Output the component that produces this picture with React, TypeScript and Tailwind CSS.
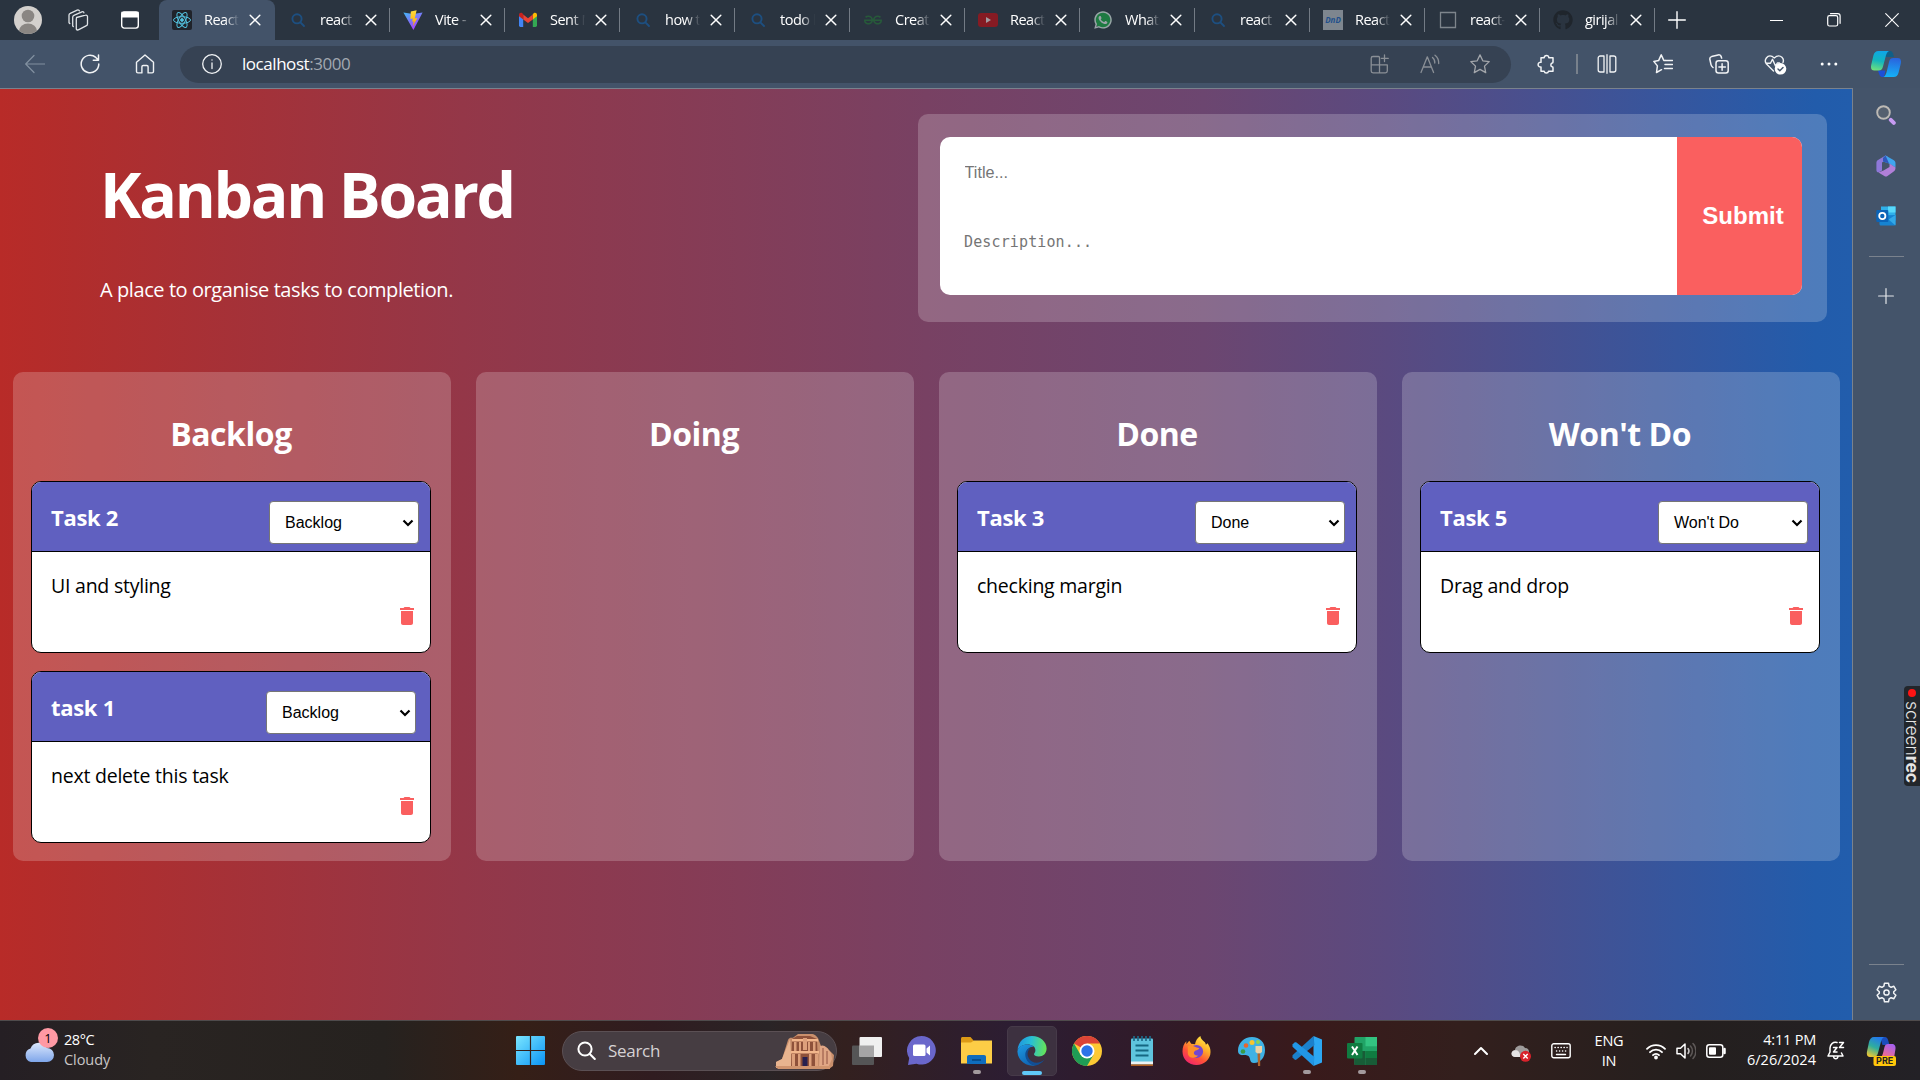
import React from "react";
import { FaGithub, FaWhatsapp } from "react-icons/fa";
import { SiGeeksforgeeks } from "react-icons/si";
import { MdDelete } from "react-icons/md";

type P = { children?: React.ReactNode; className?: string };

function Line({ children, className = "", vb = "0 0 20 20", w = 1.2 }: P & { vb?: string; w?: number }) {
  return (
    <svg width="20" height="20" viewBox={vb} className={"shrink-0 " + className} fill="none" stroke="currentColor" strokeWidth={w} strokeLinecap="round" strokeLinejoin="round">
      {children}
    </svg>
  );
}

/* ---------- Browser tabs ---------- */

const ReactIcon = () => (
  <svg viewBox="0 0 20 20" className="size-5" fill="none" stroke="#53c1de" strokeWidth="1">
    <rect width="20" height="20" rx="2" fill="#20232a" stroke="none" />
    <ellipse cx="10" cy="10" rx="8.5" ry="3.3" />
    <ellipse cx="10" cy="10" rx="8.5" ry="3.3" transform="rotate(60 10 10)" />
    <ellipse cx="10" cy="10" rx="8.5" ry="3.3" transform="rotate(120 10 10)" />
    <circle cx="10" cy="10" r="1.4" fill="#53c1de" />
  </svg>
);

const BingIcon = () => (
  <Line className="size-5 text-[#1d4f80]" w={1.9}>
    <circle cx="9" cy="8.8" r="4.6" />
    <path d="M12.4 12.4 16 16" />
  </Line>
);

const ViteIcon = () => (
  <svg viewBox="0 0 20 20" className="size-5">
    <defs>
      <linearGradient id="vite-a" x1="0" y1="0" x2=".6" y2="1">
        <stop stopColor="#41b8f5" />
        <stop offset="1" stopColor="#b03bfe" />
      </linearGradient>
      <linearGradient id="vite-b" x1="0" y1="0" x2="0" y2="1">
        <stop stopColor="#ffdc3c" />
        <stop offset="1" stopColor="#ffa800" />
      </linearGradient>
    </defs>
    <path d="M.4 2.6 10 4l9.6-1.4L10.4 20Z" fill="url(#vite-a)" />
    <path d="M13.6.2 7.8 1.4 7.4 9l2.4-.5-.7 3.2 1.6-.4-1 4.9L14.4 7.9l-2.6.5Z" fill="url(#vite-b)" />
  </svg>
);

const GmailIcon = () => (
  <svg viewBox="0 0 20 20" className="size-5">
    <path d="M1 5.5V15.500a1.400 1.400 0 0 0 1.400 1.400H5.200V8.600Z" fill="#4285f4" />
    <path d="M19 5.500V15.500a1.400 1.400 0 0 1-1.400 1.400H14.800V8.600Z" fill="#34a853" />
    <path d="M14.800 4.600V9.400L19 6.200V4.600c0-1.700-1.900-2.500-3.200-1.500Z" fill="#fbbc04" />
    <path d="M5.200 9.400V4.600L10 8.200l4.800-3.600v4.800L10 13Z" fill="#ea4335" />
    <path d="M1 4.600v1.600l4.200 3.200V4.600l-1-1.500C2.900 2.100 1 2.900 1 4.600Z" fill="#c5221f" />
  </svg>
);

const YoutubeIcon = () => (
  <svg viewBox="0 0 20 20" className="size-5">
    <rect y="3" width="20" height="14" rx="3" fill="#861b23" />
    <path d="m8 7 5 3-5 3Z" fill="#a29b9f" />
  </svg>
);

const WhatsAppIcon = () => (
  <span className="relative flex size-5 items-center justify-center">
    <svg viewBox="0 0 20 20" className="absolute inset-0 size-5">
      <circle cx="10" cy="10" r="8.500" fill="#1e7a42" />
    </svg>
    <FaWhatsapp className="relative size-5 text-[#9aa3a8]" />
  </span>
);

const DndIcon = () => (
  <span className="flex h-5 w-5 items-center justify-center bg-[#7e868f] text-[8px] font-bold text-[#22508c] italic">DnD</span>
);

const SquareIcon = () => (
  <Line className="size-5 text-[#7e858c]" w={1.3}>
    <path d="M2.500 2.500h15v15h-15Z" strokeLinejoin="miter" />
  </Line>
);

const TABS: { title: string; icon: React.ReactNode }[] = [
  { title: "react c", icon: <BingIcon /> },
  { title: "Vite - n", icon: <ViteIcon /> },
  { title: "Sent M", icon: <GmailIcon /> },
  { title: "how to", icon: <BingIcon /> },
  { title: "todo li", icon: <BingIcon /> },
  { title: "Create", icon: <SiGeeksforgeeks className="size-[18px] text-[#275a3a]" /> },
  { title: "React J", icon: <YoutubeIcon /> },
  { title: "Whats", icon: <WhatsAppIcon /> },
  { title: "react d", icon: <BingIcon /> },
  { title: "React D", icon: <DndIcon /> },
  { title: "react-b", icon: <SquareIcon /> },
  { title: "girijal", icon: <FaGithub className="size-5 text-[#1f252c]" /> },
];

function TabBody({ title, icon }: { title: string; icon: React.ReactNode }) {
  return (
    <>
      <span className="ml-[13px] flex w-5 shrink-0 justify-center">{icon}</span>
      <span className="ml-[12px] w-[35px] shrink-0 overflow-hidden text-[14.5px] leading-5 tracking-[-0.5px] whitespace-nowrap text-white [mask-image:linear-gradient(to_right,black_60%,transparent)]">
        {title}
      </span>
      <Line className="ml-[10px] size-[12px] text-white" vb="0 0 12 12" w={1.5}>
        <path d="m1.200 1.200 9.600 9.600M10.800 1.200l-9.600 9.600" />
      </Line>
    </>
  );
}

function TabStrip() {
  return (
    <div className="flex h-10 items-center bg-[#2a3440]">
      <svg viewBox="0 0 28 28" className="ml-[14px] size-7 shrink-0">
        <clipPath id="avatar">
          <circle cx="14" cy="14" r="14" />
        </clipPath>
        <g clipPath="url(#avatar)">
          <rect width="28" height="28" fill="#d3d0cd" />
          <circle cx="14" cy="10" r="6.300" fill="#8a8683" />
          <ellipse cx="14" cy="25" rx="9" ry="7.500" fill="#8a8683" />
        </g>
      </svg>
      <Line className="ml-[25px] size-[22px] text-[#dfe3e7]" vb="0 0 22 22" w={1.3}>
        <path d="m9.500 8.500 9-2.300a1.500 1.500 0 0 1 2 1.500v7.300a2 2 0 0 1-1.500 1.900l-7.700 3.900a1.300 1.300 0 0 1-2-1.200V10a1.700 1.700 0 0 1 .8-1.500Z" />
        <path d="M6.300 17.500 5.700 17V8.200c0-.8.500-1.500 1.200-1.800l8-3.600c1-.4 1.900 0 2 1M2.800 14.500l-.8-.8V6c0-.7.500-1.400 1.200-1.700l7-3.200c1-.4 2 0 2.200.8" />
      </Line>
      <svg viewBox="0 0 18 18" className="ml-8 size-[18px] shrink-0" fill="none" stroke="#fff" strokeWidth="1.400">
        <rect x=".7" y=".9" width="16.600" height="16.200" rx="2.500" />
        <path d="M1 1.500h16v4.200H1Z" fill="#fff" />
      </svg>
      <div className="ml-5 flex h-10 w-[116px] shrink-0 items-center rounded-t-lg bg-[#435369]">
        <TabBody title="React A" icon={<ReactIcon />} />
      </div>
      {TABS.map((t, i) => (
        <div key={i} className="flex h-10 w-[115px] shrink-0 items-center">
          <TabBody {...t} />
          {i > 0 && <span className="ml-auto h-6 w-px bg-[#737b85]" />}
          {i === 0 && <span className="ml-auto h-6 w-px bg-[#737b85]" />}
        </div>
      ))}
      <Line className="ml-[13px] size-[18px] text-white" vb="0 0 18 18" w={1.4}>
        <path d="M9 .7v16.600M.7 9h16.600" />
      </Line>
      <div className="ml-[84px] h-px w-[13px] bg-white" />
      <Line className="ml-11 size-[14px] text-white" vb="0 0 14 14" w={1.2}>
        <rect x=".7" y="2.700" width="10" height="10.300" rx="1.800" />
        <path d="M3.500.7h7.300a2.300 2.300 0 0 1 2.300 2.300v7.300" />
      </Line>
      <Line className="ml-[44px] size-[14px] text-white" vb="0 0 14 14" w={1.1}>
        <path d="m.7.7 12.600 12.600M13.300.7.7 13.300" />
      </Line>
    </div>
  );
}

/* ---------- Toolbar ---------- */

function CopilotLogo({ className = "" }: P) {
  return (
    <svg viewBox="0 0 30 26" className={className}>
      <defs>
        <linearGradient id="cp-a" x1=".5" y1="0" x2=".3" y2="1">
          <stop stopColor="#0fa6e6" />
          <stop offset=".5" stopColor="#13b5bd" />
          <stop offset="1" stopColor="#6fe07c" />
        </linearGradient>
        <linearGradient id="cp-b" x1=".5" y1="0" x2=".4" y2="1">
          <stop stopColor="#2a63dd" />
          <stop offset="1" stopColor="#14b2f8" />
        </linearGradient>
      </defs>
      <path d="M14 0h5c2.300 0 2.900 1.800 3.400 3.800L23 6h-4.500L15 6Z" fill="#0f5f88" />
      <path d="M7 19.500h7.500L13 26h-1.500c-2.800 0-3.200-2.500-4.500-6.500Z" fill="#1d4fd8" />
      <path d="M7.500 0H18c-2.200 1-2.800 3.500-3.600 6.500l-2.400 9c-.7 2.600-1.700 4-4.500 4H3.300C.6 19.500-.5 17.500.2 14L2.400 4.500C3.200 1.500 4.700 0 7.500 0Z" fill="url(#cp-a)" />
      <path d="M22.500 26H12.500c2-1 2.700-3.500 3.500-6.500l2-8.500c.7-2.600 1.700-4 4.500-4h4.200c2.700 0 3.800 2 3.100 5.500l-2.200 9C26.800 24.500 25.300 26 22.500 26Z" fill="url(#cp-b)" />
    </svg>
  );
}

function Toolbar() {
  return (
    <div className="flex h-12 items-center bg-[#435369] text-[#f1f3f5]">
      <Line className="ml-[25px] text-[#8290a0]">
        <path d="M19.500 10H.8M9 1.500.7 10 9 18.500" />
      </Line>
      <Line className="ml-[35px]" w={1.5}>
        <path d="M18.800 10a8.800 8.800 0 1 1-3-6.600L18.300 6M18.500 1v5.200h-5.200" />
      </Line>
      <Line className="ml-[35px]" w={1.4}>
        <path d="M10 1 1.500 8.300v9.200c0 .8.600 1.400 1.400 1.400h4V12.800c0-.8.600-1.300 1.300-1.300h3.600c.7 0 1.300.5 1.300 1.300v6.100h4c.8 0 1.400-.6 1.400-1.400V8.300Z" />
      </Line>
      <div className="ml-[25px] flex h-[37px] w-[1331px] shrink-0 items-center rounded-full bg-[#364253]">
        <Line className="ml-[22px]" w={1.3}>
          <circle cx="10" cy="10" r="9.300" />
          <path d="M10 9v5.500M10 5.800v.3" />
        </Line>
        <span className="ml-5 text-[17px] leading-6 tracking-[-0.450px] text-white">
          localhost<span className="text-[#a2a8b0]">:3000</span>
        </span>
        <Line className="ml-auto text-[#8a8f96]" w={1.3}>
          <path d="M8.500 2.500H3A1.800 1.800 0 0 0 1.200 4.300V17c0 1 .8 1.800 1.800 1.800h12.500c1 0 1.800-.8 1.800-1.800v-6.200H1.200M8.500 2.500a1 1 0 0 1 1 1v15.300M14.500 1v6.500M11.300 4.300h7" />
        </Line>
        <Line className="ml-[30px] text-[#8a8f96]" w={1.3}>
          <path d="m1 18.500 6.300-15.700 6.300 15.700M3.300 13h8M12.500 3.500a6.500 6.500 0 0 1 2.300 5.500M15 1.200a10 10 0 0 1 3.700 8.300" />
        </Line>
        <Line className="mr-[21px] ml-[30px] text-[#a3a6ab]" w={1.3}>
          <path d="m10 .9 2.800 5.900 6.400.8-4.700 4.500 1.200 6.500L10 15.400l-5.700 3.200 1.200-6.500L.8 7.600l6.400-.8Z" />
        </Line>
      </div>
      <Line className="ml-[25px]" w={1.5}>
        <path d="M5 3.700h3.200a2.300 2.300 0 1 1 4.600 0H17V8a1 1 0 0 1-.8 1 2 2 0 0 0 0 3.800 1 1 0 0 1 .8 1v3.500h-4.500a2.200 2.200 0 0 1-4.300 0H5V13a2.400 2.400 0 1 1 0-4.700Z" />
      </Line>
      <span className="ml-5 h-5 w-[1.5px] bg-[#78818c]" />
      <Line className="ml-[19px]" w={1.5}>
        <path d="M7 2H3.300C2 2 1.200 2.900 1.200 4v12c0 1.100.8 2 2.100 2H7M13 2h3.700c1.300 0 2.100.9 2.100 2v12c0 1.100-.8 2-2.100 2H13M10 .7v18.600M7 2v16M13 2v16" strokeWidth="1.300" />
      </Line>
      <Line className="ml-9" w={1.5}>
        <path d="M12.300 6.500 10.800 6.400 8.200.9 5.600 6.600.8 7.400l3.600 4.500-.9 6.600 5-2.800M12.500 6.500h7M12 10.500h7.500M11.500 14.500h8" />
      </Line>
      <Line className="ml-9" w={1.5}>
        <rect x="7" y="6.800" width="12.200" height="12.200" rx="2.500" />
        <path d="M13.100 9.700v6.500M9.900 12.900h6.500M4 13.500C2.500 12.500 2.300 12 2 10.700L.9 5.500C.6 4 1.200 3 2.600 2.600l6.500-1.700c1.500-.4 2.700.2 3 1.700l.5 1.500" />
      </Line>
      <svg viewBox="0 0 23 21" className="ml-[35px] h-[21px] w-[23px]" fill="none" stroke="#f1f3f5" strokeWidth="1.400" strokeLinejoin="round" strokeLinecap="round">
        <path d="M9.500 17 2.500 10C-.7 6 3.500.5 8 2.300L10.300 4l2.300-1.700c4-1.700 8 2.200 6.400 6.200M2.500 9.300h4l2-4 3 6.700 1.800-3h2.200" />
        <circle cx="16.500" cy="14.800" r="5.800" fill="#fff" stroke="none" />
        <path d="m14 15 1.800 1.800 3.200-3.400" stroke="#435369" />
      </svg>
      <svg viewBox="0 0 18 4" className="ml-[33px] h-1 w-[18px] fill-white">
        <circle cx="2.200" cy="2" r="1.500" />
        <circle cx="9" cy="2" r="1.500" />
        <circle cx="15.800" cy="2" r="1.500" />
      </svg>
      <CopilotLogo className="ml-[33px] h-[26px] w-[30px]" />
    </div>
  );
}

/* ---------- Kanban page ---------- */

type Task = { title: string; text: string; status: string; nudge?: boolean };
const COLUMNS: { name: string; tasks: Task[] }[] = [
  {
    name: "Backlog",
    tasks: [
      { title: "Task 2", text: "UI and styling", status: "Backlog" },
      { title: "task 1", text: "next delete this task", status: "Backlog", nudge: true },
    ],
  },
  { name: "Doing", tasks: [] },
  { name: "Done", tasks: [{ title: "Task 3", text: "checking margin", status: "Done" }] },
  { name: "Won't Do", tasks: [{ title: "Task 5", text: "Drag and drop", status: "Won't Do" }] },
];

function TaskCard({ title, text, status, nudge }: Task) {
  return (
    <article className="h-[172px] w-[400px] overflow-hidden rounded-[10px] border border-black bg-white">
      <header className="flex h-[70px] items-start justify-between border-b border-black bg-[#6060c0] pl-[19px]">
        <h3 className="mt-5 text-[22px] leading-[30px] font-bold tracking-[-0.300px] text-white">{title}</h3>
        <div
          className={
            "mt-[19px] flex h-[43px] w-[150px] items-center justify-between rounded-[4px] border border-[#767676] bg-white pr-[4px] pl-[15px] font-['Liberation_Sans',sans-serif] text-[16px] text-black " +
            (nudge ? "mr-[14px]" : "mr-[11px]")
          }
        >
          {status}
          <Line className="h-[8px] w-[12px]" vb="0 0 12 8" w={2.2}>
            <path d="m1.500 1.500 4.500 4.500 4.500-4.500" strokeLinecap="butt" strokeLinejoin="miter" />
          </Line>
        </div>
      </header>
      <p className="mt-[20px] pl-[19px] text-[19.5px] leading-7 tracking-[-0.230px] text-black">{text}</p>
      <div className="mt-[4px] flex justify-end pr-[11px]">
        <MdDelete className="size-6 text-[#fa5f5f]" />
      </div>
    </article>
  );
}

function KanbanPage() {
  return (
    <main className="h-[932px] w-[1852px] border-t border-[#7a828d] bg-[linear-gradient(90deg,#b82b28_0%,#b12d2c_4%,#943748_25%,#784163_50%,#6c4670_65%,#5a4a80_75%,#48508f_83%,#2f58a3_93%,#225cab_98%,#225dac_100%)]">
      <section className="flex h-[283px]">
        <div className="w-[918px] pt-[65px] pl-[100px] text-white">
          <h1 className="text-[62.5px] leading-[80px] font-bold tracking-[-2.300px]">Kanban Board</h1>
          <p className="mt-[42px] text-[20px] leading-7 tracking-[-0.420px]">A place to organise tasks to completion.</p>
        </div>
        <div className="mt-[25px] h-[208px] w-[909px] rounded-[10px] bg-white/20 pt-[23px] pl-[22px]">
          <form className="flex h-[158px] w-[862px] overflow-hidden rounded-[10px] bg-white font-['Liberation_Sans',sans-serif]">
            <div className="flex w-[737px] flex-col">
              <input placeholder="Title..." className="h-[70px] px-[24.5px] text-[16.200px] outline-none placeholder:text-[#757575]" />
              <textarea
                placeholder="Description..."
                className="h-[88px] resize-none px-[24px] pt-[25px] font-['DejaVu_Sans_Mono',monospace] text-[15px] leading-[20px] tracking-[0.130px] outline-none placeholder:text-[#757575]"
              />
            </div>
            <button className="w-[125px] bg-[#fa5f5f] pl-[7px] text-[24px] font-bold text-white">Submit</button>
          </form>
        </div>
      </section>
      <section className="flex gap-[25px] pl-[13px]">
        {COLUMNS.map((c) => (
          <div key={c.name} className="flex h-[489px] w-[438px] flex-col gap-[18px] rounded-[10px] bg-white/20 pl-[18px]">
            <h2 className="mt-10 mb-[7px] pr-[20px] text-center text-[32px] leading-[44px] font-bold tracking-[-0.450px] text-white">{c.name}</h2>
            {c.tasks.map((t) => (
              <TaskCard key={t.title} {...t} />
            ))}
          </div>
        ))}
      </section>
    </main>
  );
}

/* ---------- Edge sidebar ---------- */

function Sidebar() {
  return (
    <aside className="flex h-[932px] w-[68px] flex-col items-center border-l border-[#7a828d] bg-[#44546a]">
      <div className="flex w-[66px] flex-col items-center self-start">
        <svg viewBox="0 0 20 20" className="mt-[17px] size-5">
          <circle cx="7.500" cy="7.500" r="6.300" fill="#55606f" stroke="#bdbab5" strokeWidth="1.900" />
          <path d="m14.800 14.800 3 3" stroke="#c79bf2" strokeWidth="4" strokeLinecap="round" />
        </svg>
        <svg viewBox="0 0 20 22" className="mt-[30px] h-[22px] w-5">
          <path d="M9.500.5 2 5C.9 5.700.4 6.500.4 8v7c0 1.500 1.200 2.800 2.600 2.200L6 15.500V7.500L11.500 4V1.500Z" fill="#8e78d8" />
          <path d="M9.500.5 17.500 5c1.500.9 2 1.700 2 3.500v4L13 8.500 7 6.500V3Z" fill="#3fa5ee" />
          <path d="M9.500.5 7 3v3.500L13 8.500Z" fill="#3158ba" />
          <path d="M19.500 12.500c0 2-.3 3-1.800 3.900L11.500 21c-1.200.7-2 .7-3.200 0L2.500 17.500l5-2 6-3.500V8.500Z" fill="#b17fd8" />
        </svg>
        <svg viewBox="0 0 20 20" className="mt-[29px] size-5">
          <rect x="5" y=".5" width="14.500" height="14" fill="#2fb0ea" />
          <path d="M12 .5h7.500v6H12Z" fill="#58d9fb" />
          <path d="M3.500 9.500 19.500 9v9c0 1-.6 1.500-1.500 1.500H5c-1 0-1.500-.5-1.500-1.500Z" fill="#1683d1" />
          <path d="m19.500 9-7 4.500 7 6Z" fill="#32a8e8" />
          <rect x=".3" y="4" width="12" height="12" rx="1" fill="#0b64b8" />
          <circle cx="6.300" cy="10" r="3.100" fill="none" stroke="#fff" strokeWidth="1.800" />
        </svg>
        <div className="mt-[30px] h-px w-[35px] bg-[#7a828d]" />
        <Line className="mt-[31px] size-4 text-[#e3e6e9]" vb="0 0 16 16">
          <path d="M8 .6v14.800M.6 8h14.800" />
        </Line>
      </div>
      <div className="mt-[382px] flex h-[100px] w-4 shrink-0 flex-col items-center gap-1 self-end rounded-l-[4px] bg-[#22262b] pt-[3px]">
        <span className="size-2 shrink-0 rounded-full bg-[#ff1414]" />
        <span className="font-['Inter',sans-serif] text-[17.5px] leading-[15px] tracking-[-0.100px] text-[#e5e5e5] [writing-mode:vertical-rl]">
          <span className="font-light">screen</span>
          <b>rec</b>
        </span>
      </div>
      <div className="mt-[178px] h-px w-[35px] shrink-0 bg-[#7a828d]" />
      <Line className="mt-[17px] size-[21px] text-[#f1f3f5]" vb="0 0 21 21" w={1.5}>
        <path d="M8.500 1.200h4l.6 2.900 2 1.200 2.800-1 2 3.500-2.200 1.900v1.600l2.200 1.900-2 3.500-2.800-1-2 1.200-.6 2.900h-4l-.6-2.900-2-1.200-2.800 1-2-3.500 2.200-1.900V9.700L1.100 7.800l2-3.500 2.800 1 2-1.200Z" />
        <circle cx="10.500" cy="10.500" r="2.600" />
      </Line>
    </aside>
  );
}

/* ---------- Taskbar ---------- */

const Cell = ({ children, dot }: P & { dot?: boolean }) => (
  <div className="relative flex h-[59px] w-[55px] items-center justify-center">
    {children}
    {dot && <span className="absolute bottom-1.5 left-1/2 h-1 w-2 -translate-x-1/2 rounded-full bg-[#a39a9d]" />}
  </div>
);

function Petra() {
  return (
    <svg viewBox="0 0 60 40" className="h-10 w-[60px]">
      <path d="M2 37V31l6-3 6-19c2-4 4-1 6-3l4-3h13c4 0 5 2 7 4l3 8 6 2 7 7-1 11-4 3Z" fill="#c98f6c" />
      <path d="M2 37v-6l6-3 8-20 2 29Z" fill="#e8b48f" />
      <path d="M46 15c4-2 7 1 11 7l1 6-4 9H45Z" fill="#e0a685" />
      <path d="M18 8 23 5h13l7 3 1 29H17Z" fill="#8e513a" />
      <path d="M18 8h26v2.500H18ZM17 20h28v2.500H17Z" fill="#f2b68b" />
      <path d="M20 11h2.500v9H20ZM25 11h2v9h-2ZM34 11h2v9h-2ZM39 11h2.500v9H39ZM18 23h3v13h-3ZM24 23h2.500v13H24ZM35 23h2.500v13H35ZM41 23h3v13h-3ZM29 7h4v12h-4Z" fill="#dda07b" />
      <path d="M28.500 26h5v10h-5Z" fill="#27204f" />
      <path d="M49 17v17M53 20v13" stroke="#9d604e" strokeWidth="1.200" />
      <path d="M1 35h55v3H4Z" fill="#d0946e" />
    </svg>
  );
}

const EdgeIcon = () => (
  <svg viewBox="0 0 30 30" className="size-[30px]">
    <defs>
      <linearGradient id="edge-a" x1="0" y1=".4" x2="1" y2=".5">
        <stop stopColor="#1f95df" />
        <stop offset=".45" stopColor="#28bed5" />
        <stop offset="1" stopColor="#66e455" />
      </linearGradient>
      <linearGradient id="edge-b" x1="0" y1="0" x2=".5" y2="1">
        <stop stopColor="#1d9be4" />
        <stop offset="1" stopColor="#1167b5" />
      </linearGradient>
    </defs>
    <path d="M.5 14C1.300 5.500 7.500 0 15 0c8.500 0 14.600 6 14.600 12.500 0 5-3.500 8-7.800 8-3 0-4.800-1.100-4.800-2.300 0-.9 1.400-1.500 1.400-4 0-3.500-3.400-5.700-8-5.700C5.500 8.500 1.800 11 .5 14Z" fill="url(#edge-a)" />
    <path d="M.4 15.500C.9 11 5.500 8.500 10.400 8.500c2.600 0 5 .9 6.300 2.300-3.700-.6-7.700 2.200-7.700 7.700 0 6.500 5 10.500 9.500 10.900A15 15 0 0 1 .4 15.500Z" fill="url(#edge-b)" />
    <path d="M13.800 12.300c-3.300 2-4.200 6-2 10 2.800 5 9.800 6.300 15.700 1.200A15 15 0 0 1 18.500 29.500C13 29.500 8.300 24 8.300 18.800c0-3.500 2-6.200 5.500-6.500Z" fill="#114f95" />
  </svg>
);

const ChromeIcon = () => (
  <svg viewBox="0 0 30 30" className="size-[30px]">
    <circle cx="15" cy="15" r="15" fill="#fcc934" />
    <path d="M15 15 2 7.500A15 15 0 0 1 28 7.500H15Z" fill="#dc4437" />
    <path d="M2 7.500A15 15 0 0 0 15 30l6.500-11.300-13 0Z" fill="#1f9d55" />
    <circle cx="15" cy="15" r="7.500" fill="#fff" />
    <circle cx="15" cy="15" r="5.700" fill="#2c73e8" />
  </svg>
);

const FirefoxIcon = () => (
  <svg viewBox="0 0 30 30" className="size-[29px]">
    <defs>
      <linearGradient id="ff" x1=".8" y1="0" x2=".2" y2="1">
        <stop stopColor="#fff04a" />
        <stop offset=".35" stopColor="#ffae29" />
        <stop offset=".65" stopColor="#ff5337" />
        <stop offset="1" stopColor="#ee1f72" />
      </linearGradient>
    </defs>
    <path d="M19 0c.5 3 2 4.300 4 6 1 .8 1.400 1.700 1.700 3l1.800-1.500c2.300 3.500 3 6 3 9C29.500 24 23 30 15 30S.5 24 .5 16c0-4.500 1.500-8 4-10.500v3L7.500 5l2 3 4 .5C14 5.500 15.500 2 19 0Z" fill="url(#ff)" />
    <circle cx="15" cy="16" r="6.800" fill="#7446cf" />
    <path d="M6 10.500c3-1.500 5.500-.6 8 1 1.600.9 3 .9 4 1.500-1.500 2-4.500 1.500-5.500 3.500-1 2.300 1.500 4 4 3.700-2 3.300-10 3.600-10.500-2.700Z" fill="#ff9029" />
  </svg>
);

const APPS: { icon: React.ReactNode; dot?: boolean }[] = [
  {
    icon: (
      <svg viewBox="0 0 30 28" className="h-7 w-[30px]">
        <rect y="8.500" width="22" height="19.500" rx="1" fill="#555556" />
        <rect x="7.500" width="22.500" height="20" rx="1" fill="#f0f0f0" />
        <rect x="7.500" y="8.500" width="14.500" height="11.500" fill="#a6a5a6" />
      </svg>
    ),
  },
  {
    icon: (
      <svg viewBox="0 0 29 29" className="size-[29px]">
        <path d="M14.500 0a14.300 14.300 0 1 1-5 27.700L1 29l1.200-7A14.500 14.500 0 0 1 14.500 0Z" fill="#6a67cb" />
        <rect x="6" y="8.500" width="12.500" height="11.500" rx="1.500" fill="#fff" />
        <path d="m19.500 12.500 3.500-3v10l-3.500-3Z" fill="#fff" />
      </svg>
    ),
  },
  {
    dot: true,
    icon: (
      <svg viewBox="0 0 31 27" className="h-[27px] w-[31px]">
        <path d="M0 1.500C0 .7.7 0 1.500 0h8L13 4v4H0Z" fill="#dc9a16" />
        <path d="M0 5.500h10L13 3.500h18V26.500H0Z" fill="#fdcd46" />
        <path d="M6 27v-7c0-1.200.8-2 2-2h15c1.200 0 2 .8 2 2v7Z" fill="#0f6cbd" />
        <path d="M11 23h9" stroke="#06437e" strokeWidth="1.500" />
      </svg>
    ),
  },
  { icon: null },
  { icon: <ChromeIcon /> },
  {
    icon: (
      <svg viewBox="0 0 22 30" className="h-[30px] w-[22px]">
        <rect y="2.500" width="22" height="27.500" rx="1" fill="#5fc4de" />
        <path d="M0 25.500h22v3H0Z" fill="#ecf2f4" />
        <path d="M0 28.300h22V30H0Z" fill="#ad5e22" />
        <path d="M3 0v5M7 0v5M11 0v5M15 0v5M19 0v5" stroke="#1d6b8a" strokeWidth="1.700" />
        <path d="M4.500 9.500h13M4.500 14.500h13M4.500 19.500h13" stroke="#156782" strokeWidth="1.800" />
      </svg>
    ),
  },
  { icon: <FirefoxIcon /> },
  {
    icon: (
      <svg viewBox="0 0 29 30" className="h-[30px] w-[29px]">
        <path d="M15 1c8 0 13 5.500 13 13 0 7.500-4.500 13-11 13-5 0-3-5-5.500-7S1 21.500 1 14.500C1 7 7 1 15 1Z" fill="#3fb2e5" />
        <circle cx="15" cy="6.500" r="2.500" fill="#f7c52f" />
        <circle cx="9" cy="9.500" r="2.300" fill="#e8662d" />
        <circle cx="6" cy="15.500" r="2.300" fill="#399b49" />
        <circle cx="21" cy="6" r="2" fill="#8bd255" />
        <path d="M18.500 10h6.500v6l-2 1.500h-2.500l-2-1.500Z" fill="#ecd3a6" />
        <path d="M20.500 17.500h2.700V30h-2.200Z" fill="#b0662e" />
      </svg>
    ),
  },
  {
    dot: true,
    icon: (
      <svg viewBox="0 0 30 30" className="size-[30px]">
        <path d="M21.500 0 30 3.500v23L21.500 30Z" fill="#2ca7f2" />
        <path d="M21.500 0 .5 19.300v2.200l2 2c.7.5 1.300.5 2 0L22.500 9Z" fill="#1b80cb" />
        <path d="M21.500 30 .5 10.700V8.500l2-2c.7-.5 1.300-.5 2 0L22.500 21Z" fill="#2196e6" />
      </svg>
    ),
  },
  {
    dot: true,
    icon: (
      <svg viewBox="0 0 30 28" className="h-7 w-[30px]">
        <path d="M7.500 1c0-.6.4-1 1-1H29c.6 0 1 .4 1 1v26c0 .6-.4 1-1 1H8.500c-.6 0-1-.4-1-1Z" fill="#21a366" />
        <path d="M18.500 0H30v9.300H18.500Z" fill="#33c481" />
        <path d="M7.500 14h11v14h-11Z" fill="#185c37" />
        <path d="M18.500 14H30v7H18.500Z" fill="#107c41" />
        <path d="M18.500 21H30v7H18.500Z" fill="#185c37" />
        <rect y="6" width="15.500" height="15.500" rx="1" fill="#107c41" />
        <path d="m5 9.500 5.500 8.500M10.500 9.500 5 18" stroke="#fff" strokeWidth="2" />
      </svg>
    ),
  },
];

function Taskbar() {
  return (
    <footer className="flex h-[60px] items-center border-t border-[#4f4b4c] bg-[linear-gradient(90deg,#251f24_0%,#292422_8%,#26221f_20%,#351f17_27%,#301c20_34%,#2a2426_40%,#33201f_44%,#2c1d33_53%,#321a26_62%,#391a1b_68%,#331f1d_76%,#241f1e_88%,#232126_100%)] text-white">
      <div className="relative ml-[24px] flex h-[59px] w-[492px] shrink-0 items-center">
        <svg viewBox="0 0 30 22" className="h-[22px] w-[30px]">
          <defs>
            <linearGradient id="cloud" x1="0" y1="0" x2="0" y2="1">
              <stop stopColor="#dbe8fd" />
              <stop offset="1" stopColor="#7fa6ea" />
            </linearGradient>
          </defs>
          <path d="M7 22a7 7 0 0 1-.5-13.500A9 9 0 0 1 23 8a7 7 0 0 1 0 14Z" fill="url(#cloud)" />
        </svg>
        <span className="absolute top-[7px] left-[14px] flex size-5 items-center justify-center rounded-full bg-[#ff99a4] text-[13px] leading-5 text-black">1</span>
        <div className="mb-px ml-[10px] text-[14.5px] leading-5 tracking-[-0.450px]">
          <div>28°C</div>
          <div className="tracking-[-0.050px] text-[#c9c6c7]">Cloudy</div>
        </div>
      </div>
      <svg viewBox="0 0 29 29" className="size-[29px] shrink-0">
        <defs>
          <linearGradient id="win" x1="0" y1="0" x2="1" y2="1">
            <stop stopColor="#7be6ff" />
            <stop offset="1" stopColor="#0a94f5" />
          </linearGradient>
        </defs>
        <path d="M1 0h12.900v13.900H0V1a1 1 0 0 1 1-1ZM15.100 0H28a1 1 0 0 1 1 1v12.900H15.100ZM0 15.100h13.900V29H1a1 1 0 0 1-1-1ZM15.100 15.100H29V28a1 1 0 0 1-1 1H15.100Z" fill="url(#win)" />
      </svg>
      <div className="ml-[17px] flex h-10 w-[275px] shrink-0 items-center rounded-full border border-[#5b5054] bg-[#463d42]">
        <Line className="ml-[14px] size-[19px]" vb="0 0 19 19" w={2}>
          <circle cx="8" cy="8" r="6.600" />
          <path d="m12.800 13 5 5" />
        </Line>
        <span className="ml-3 text-[17px] leading-6 tracking-[-0.300px] text-[#d6d2d4]">Search</span>
        <span className="mr-[2px] ml-auto">
          <Petra />
        </span>
      </div>
      <div className="ml-[2px] flex shrink-0">
        {APPS.map((a, i) =>
          i === 3 ? (
            <Cell key={i}>
              <div className="relative flex h-[50px] w-[50px] items-center justify-center rounded-[5px] border border-[#463a49] bg-[#3d3140]">
                <EdgeIcon />
                <span className="absolute bottom-0 h-1 w-5 rounded-full bg-[#60c8f8]" />
              </div>
            </Cell>
          ) : (
            <Cell key={i} dot={a.dot}>
              {a.icon}
            </Cell>
          ),
        )}
      </div>
      <Line className="ml-[85px] size-[14px]" vb="0 0 14 14" w={2}>
        <path d="m1 10 6-6 6 6" />
      </Line>
      <svg viewBox="0 0 20 18" className="mt-1 ml-[23px] h-[18px] w-5 shrink-0">
        <path d="M5 13C0 13-1 6.500 4 6 4.500 1 12 0 14 4c3 0 4 2 4 4v5Z" fill="#9e9b9b" />
        <path d="M4 13c-4 0-5-5-1-6.500C6 5.500 9 7 9.500 13Z" fill="#e5e3e3" />
        <circle cx="14.500" cy="12.300" r="5.500" fill="#d8222b" />
        <path d="m12.300 10.100 4.400 4.400M16.700 10.100l-4.400 4.400" stroke="#fff" strokeWidth="1.400" />
      </svg>
      <Line className="ml-5 h-4 w-5" vb="0 0 20 16" w={1.4}>
        <rect x=".8" y=".8" width="18.400" height="14" rx="2" />
        <path d="M4 4.500h.3M7 4.500h.3M10 4.500h.3M13 4.500h.3M16 4.500h.1M5.500 8h.2M8.500 8h.2M11.500 8h.2M14.500 8h.2M5.500 11.500h9" />
      </Line>
      <div className="ml-[19px] w-[38px] shrink-0 text-center text-[14.5px] leading-5 tracking-[-0.200px]">
        ENG
        <br />
        IN
      </div>
      <Line className="ml-[18px] h-[18px] w-5" vb="0 0 20 18" w={1.8}>
        <path d="M1 6.800a12.700 12.700 0 0 1 18 0M4 10.200a8.400 8.400 0 0 1 12 0M7 13.200a4.200 4.200 0 0 1 6 0" />
        <circle cx="10" cy="15.500" r="1" fill="#fff" />
      </Line>
      <Line className="ml-[10px] size-5" w={1.5}>
        <path d="M1 7.200h3.500L9 3v14l-4.500-4.200H1Z" />
        <path d="M12 7.500a4 4 0 0 1 0 5" stroke="#c9c5c5" />
        <path d="M14.500 5a7.500 7.500 0 0 1 0 10M17 2.500a11 11 0 0 1 0 15" stroke="#5e5958" />
      </Line>
      <svg viewBox="0 0 20 14" className="ml-[10px] h-[14px] w-5 shrink-0" fill="none" stroke="#fff" strokeWidth="1.500">
        <rect x=".8" y=".8" width="16" height="12.400" rx="2.500" />
        <rect x="3" y="3.200" width="7" height="7.600" rx="1" fill="#fff" stroke="none" />
        <path d="M18.500 5v4" strokeWidth="2.500" strokeLinecap="round" />
      </svg>
      <div className="mb-px ml-[10px] w-[80px] shrink-0 text-right text-[14.5px] leading-5 tracking-[0.050px] whitespace-nowrap">
        <span className="tracking-[-0.200px]">4:11 PM</span>
        <br />
        6/26/2024
      </div>
      <svg viewBox="0 0 18 19" className="ml-[11px] h-[19px] w-[18px] shrink-0" fill="none" stroke="#fff" strokeWidth="1.500" strokeLinecap="round" strokeLinejoin="round">
        <path d="M10 1.500C6 .5 3 3.500 3 7v4l-2 4h15l-1.500-3M6.500 15.500c.5 3 4 3 4.500 0" />
        <path d="M6.500 6.500H10L6.500 11H10M12.500 1.500h4L12.500 6.500h4" />
      </svg>
      <svg viewBox="0 0 30 30" className="ml-[21px] size-[30px] shrink-0">
        <defs>
          <linearGradient id="pre-a" x1=".6" y1="0" x2=".2" y2="1">
            <stop stopColor="#2379ec" />
            <stop offset=".5" stopColor="#2fae9d" />
            <stop offset="1" stopColor="#f5c82f" />
          </linearGradient>
          <linearGradient id="pre-b" x1=".7" y1="0" x2=".2" y2="1">
            <stop stopColor="#a660f0" />
            <stop offset="1" stopColor="#fb6f7c" />
          </linearGradient>
        </defs>
        <path d="M14 1h5c3 0 3.300 4 4.500 8h-7Z" fill="#1b4dbb" />
        <path d="M8 1h10c-2 1-2.700 3.500-3.500 6.500L12 17c-.7 2.500-2 4-4.500 4H4C1 21 .5 18 1 15.500L3 6C3.800 3 5.300 1 8 1Z" fill="url(#pre-a)" />
        <path d="M22 8h4c3 0 4 2.500 3.400 5.500L28 22H14c2-1 2.500-3 3.300-6L18.500 11c.6-2 1.500-3 3.500-3Z" fill="url(#pre-b)" />
        <rect x="7.500" y="20" width="22.500" height="10" rx="2" fill="#ffc60a" />
        <text x="18.700" y="28.300" textAnchor="middle" fontSize="9" fontWeight="700" fontFamily="Inter, sans-serif" fill="#222">
          PRE
        </text>
      </svg>
    </footer>
  );
}

export default function App() {
  return (
    <div className="flex h-[1080px] w-[1920px] flex-col overflow-hidden font-['Open_Sans','Noto_Sans',sans-serif]">
      <TabStrip />
      <Toolbar />
      <div className="flex h-[932px]">
        <KanbanPage />
        <Sidebar />
      </div>
      <Taskbar />
    </div>
  );
}
